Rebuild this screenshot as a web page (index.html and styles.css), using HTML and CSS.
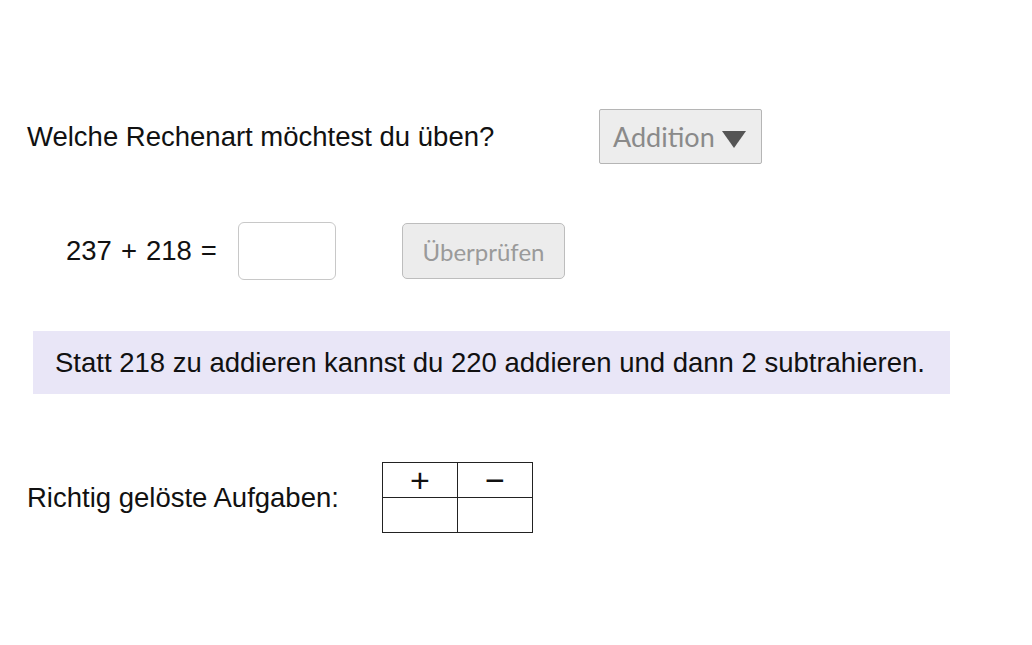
FILE: index.html
```html
<!DOCTYPE html>
<html lang="de">
<head>
<meta charset="utf-8">
<title>Rechnen üben</title>
<link rel="stylesheet" href="styles.css">
</head>
<body>
<main class="page">
  <section class="row row-choice">
    <p class="label label-choice">Welche Rechenart möchtest du üben?</p>
    <div class="select">
      <span class="select-text">Addition</span>
      <svg class="select-arrow" width="24" height="18" viewBox="0 0 24 18"><polygon points="0,1 24,1 12,18" fill="#555"/></svg>
    </div>
  </section>

  <section class="row row-task">
    <span class="equation">237<span class="op">+</span>218<span class="op">=</span></span>
    <div class="answer"></div>
    <button class="check" type="button">Überprüfen</button>
  </section>

  <section class="hint">Statt 218 zu addieren kannst du 220 addieren und dann 2 subtrahieren.</section>

  <section class="row row-score">
    <p class="label label-score">Richtig gelöste Aufgaben:</p>
    <table class="score">
      <tr><th>+</th><th>−</th></tr>
      <tr><td></td><td></td></tr>
    </table>
  </section>
</main>
</body>
</html>
```

FILE: styles.css
```css
* { box-sizing: border-box; }
html, body { margin: 0; padding: 0; background: #fff; }
body {
  font-family: "Liberation Sans", Arial, sans-serif;
  color: #111;
  font-size: 27.5px;
}
.page {
  padding: 109px 0 0 27px;
}
.row {
  display: flex;
  align-items: center;
}
.label { margin: 0; }
.label-choice { width: 572px; }
.select {
  width: 163px;
  height: 55px;
  background: #ededed;
  border: 1px solid #b5b5b5;
  border-radius: 2px;
  display: flex;
  align-items: center;
  padding-left: 13px;
  gap: 7px;
}
.select-text {
  font-family: Lato, "Liberation Sans", sans-serif;
  font-size: 27px;
  color: #8a8a8a;
}
.select-arrow { margin-top: 4px; }

.row-task {
  margin-top: 58px;
  padding-left: 39px;
}
.equation { width: 172px; white-space: nowrap; }
.op { margin: 0 9px; }
.answer {
  width: 98px;
  height: 58px;
  border: 1px solid #c8c8c8;
  border-radius: 6px;
  background: #fff;
}
.check {
  margin-left: 66px;
  width: 163px;
  height: 56px;
  background: #ececec;
  border: 1px solid #bdbdbd;
  border-radius: 5px;
  font-family: Lato, "Liberation Sans", sans-serif;
  font-size: 24px;
  color: #9a9a9a;
  padding: 0;
}

.hint {
  margin: 51px 0 0 6px;
  width: 917px;
  height: 63px;
  background: #e9e6f7;
  padding-left: 22px;
  display: flex;
  align-items: center;
}

.row-score {
  margin-top: 68px;
}
.label-score { width: 355px; }
.score {
  border-collapse: collapse;
  border: 1.5px solid #222;
}
.score th, .score td {
  border: 1.5px solid #222;
  width: 75px;
  height: 35px;
  padding: 0;
  text-align: center;
  font-weight: normal;
  font-family: "Liberation Sans", sans-serif;
  font-size: 34px;
  line-height: 1;
}
```
